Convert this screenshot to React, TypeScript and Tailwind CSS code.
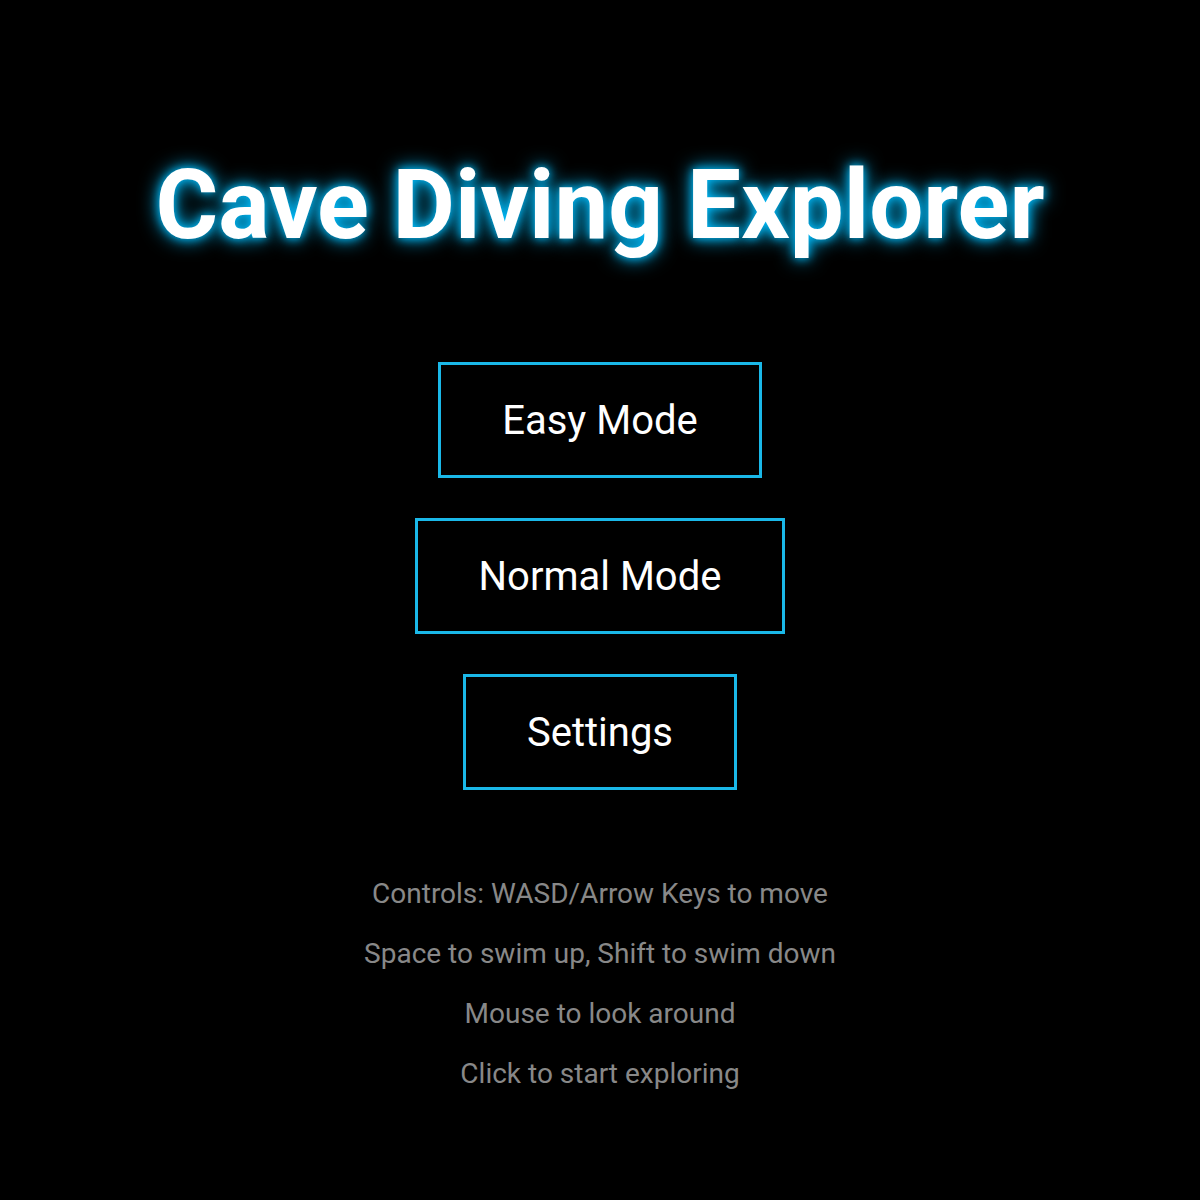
export default function App() {
  const modes = ["Easy Mode", "Normal Mode", "Settings"];
  const hints = [
    "Controls: WASD/Arrow Keys to move",
    "Space to swim up, Shift to swim down",
    "Mouse to look around",
    "Click to start exploring",
  ];

  return (
    <div className="flex min-h-[1200px] flex-col items-center bg-black pt-[150px] font-['Roboto',sans-serif] text-white">
      <h1 className="text-[96px] font-bold leading-[110px] [text-shadow:0_0_10px_#00bfff,0_0_20px_#00bfff]">
        Cave Diving Explorer
      </h1>

      <div className="mt-[102px] flex flex-col items-center gap-[40px]">
        {modes.map((m) => (
          <button
            key={m}
            type="button"
            className="h-[116px] border-[3px] border-[#1ab8e8] bg-black px-[61px] pt-[2px] text-[40px] leading-none text-white"
          >
            {m}
          </button>
        ))}
      </div>

      <div className="mt-[88px] flex flex-col items-center gap-[28px]">
        {hints.map((h) => (
          <p key={h} className="text-[28px] leading-[32px] text-[#888888]">
            {h}
          </p>
        ))}
      </div>
    </div>
  );
}
